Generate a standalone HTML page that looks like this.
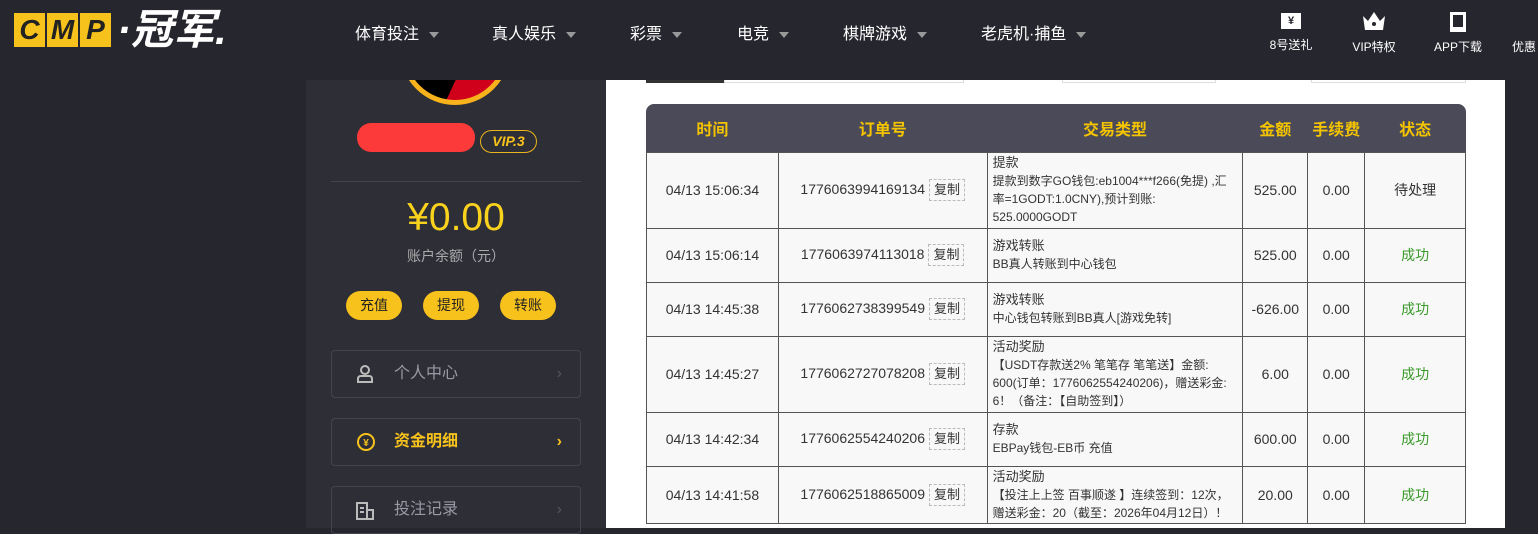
<!DOCTYPE html>
<html><head><meta charset="utf-8"><style>
*{margin:0;padding:0;box-sizing:border-box}
body{width:1538px;height:528px;overflow:hidden;background:#26262e;font-family:"Liberation Sans","Noto Sans CJK SC",sans-serif;position:relative}
.a{position:absolute}
.hdr{left:0;top:0;width:1538px;height:80px;background:#26262e}
.logo span.b{display:inline-block;width:31px;height:34px;background:#f8c21c;margin-right:2px;color:#222;font:italic 900 28px/34px "Liberation Sans",sans-serif;text-align:center}
.nav{top:20px;color:#fff;font-size:16px}
.nav i{display:inline-block;width:0;height:0;border-left:5px solid transparent;border-right:5px solid transparent;border-top:6px solid #999;margin-left:10px;vertical-align:middle}
.ic{top:10px;width:60px;text-align:center;color:#fff;font-size:12px}
.side{left:306px;top:80px;width:300px;height:448px;background:#2e2e37}
.btn{top:291px;width:56px;height:29px;border-radius:15px;background:#f8c21c;color:#222;font-size:14px;text-align:center;line-height:29px}
.menu{left:331px;width:250px;height:48px;border:1px solid #44444e;border-radius:4px;color:#9a9aa6;font-size:16px;line-height:46px;padding-left:62px}
.menu .ar{position:absolute;right:18px;top:0;color:#555560;font-size:16px}
.main{left:606px;top:80px;width:899px;height:448px;background:#fff}
table{position:absolute;left:646px;top:104px;width:820px;border-collapse:collapse;font-size:14px;color:#333}
th{color:#f5c400;font-size:16px;height:48px;font-weight:bold;background:none}
td{border:1px solid #555;background:#f8f8f8;text-align:center;line-height:18px;padding:0 4px}
td.t{text-align:left;font-size:12px;padding:0 5px;line-height:18px}
td.t b{font-weight:normal;font-size:13px}
.cp{display:inline-block;border:1px dashed #bbb;font-size:13px;padding:1px 4px;margin-left:4px;line-height:18px}
.ok{color:#3a9a2a}
</style></head><body>
<div class="a hdr"></div>
<div class="a logo" style="left:14px;top:13px;white-space:nowrap"><span class="b">C</span><span class="b">M</span><span class="b">P</span><span style="color:#fff;font:italic bold 42px/34px 'Liberation Sans','Noto Sans CJK SC',sans-serif;margin-left:4px;vertical-align:top">·冠军.</span></div>
<div class="a nav" style="left:355px">体育投注<i></i></div>
<div class="a nav" style="left:492px">真人娱乐<i></i></div>
<div class="a nav" style="left:630px">彩票<i></i></div>
<div class="a nav" style="left:737px">电竞<i></i></div>
<div class="a nav" style="left:843px">棋牌游戏<i></i></div>
<div class="a nav" style="left:981px">老虎机·捕鱼<i></i></div>
<div class="a ic" style="left:1261px"><div style="margin:3px auto 7px;width:20px;height:16px;background:#fff;color:#26262e;font-size:11px;line-height:16px;font-weight:bold">¥</div>8号送礼</div>
<div class="a ic" style="left:1344px"><svg width="26" height="22" viewBox="0 0 26 22" style="margin-bottom:3px"><path d="M2 6L7 11L13 2L19 11L24 6L22 20H4Z" fill="#fff"/><circle cx="13" cy="14" r="2" fill="#26262e"/></svg><br>VIP特权</div>
<div class="a ic" style="left:1428px"><div style="margin:2px auto 6px;width:16px;height:20px;border:3px solid #fff;border-bottom-width:5px"></div>APP下载</div>
<div class="a ic" style="left:1512px;text-align:left"><div style="height:28px"></div>优惠</div>

<div class="a side"></div>
<div class="a" style="left:400px;top:80px;width:110px;height:25px;overflow:hidden"><div style="width:110px;height:110px;border-radius:50%;border:5px solid #f8b21c;background:linear-gradient(115deg,#000 60%,#d0021b 60%);margin-top:-85px"></div></div>
<div class="a" style="left:357px;top:123px;width:118px;height:29px;border-radius:14px;background:#fc3a3a"></div>
<div class="a" style="left:480px;top:130px;width:57px;height:23px;border:1px solid #e8b51c;border-radius:12px;color:#f8c21c;font:italic bold 14px/21px 'Liberation Sans',sans-serif;text-align:center">VIP.3</div>
<div class="a" style="left:331px;top:181px;width:250px;height:1px;background:#44444e"></div>
<div class="a" style="left:306px;top:196px;width:300px;text-align:center;color:#f8d21c;font-size:39px">¥0.00</div>
<div class="a" style="left:306px;top:246px;width:300px;text-align:center;color:#aaa;font-size:14px">账户余额（元）</div>
<div class="a btn" style="left:346px">充值</div>
<div class="a btn" style="left:423px">提现</div>
<div class="a btn" style="left:500px">转账</div>
<div class="a menu" style="top:350px"><svg class="a" style="left:24px;top:14px" width="18" height="18" viewBox="0 0 18 18" fill="none" stroke="#bbb" stroke-width="2"><circle cx="9" cy="5" r="4"/><path d="M2 17v-3q0-3 3-3h8q3 0 3 3v3z"/></svg>个人中心<span class="ar">›</span></div>
<div class="a menu" style="top:418px;color:#f8c21c;font-weight:bold"><svg class="a" style="left:24px;top:13px" width="20" height="20" viewBox="0 0 20 20" fill="none" stroke="#f8c21c" stroke-width="2"><circle cx="10" cy="10" r="8"/><text x="10" y="14" font-size="10" fill="#f8c21c" stroke="none" text-anchor="middle">¥</text></svg>资金明细<span class="ar" style="color:#f8c21c">›</span></div>
<div class="a menu" style="top:486px"><svg class="a" style="left:24px;top:15px" width="18" height="18" viewBox="0 0 18 18" fill="none" stroke="#bbb" stroke-width="2"><path d="M1 1h10v16H1zM11 8h6v9h-6M4 6h4M4 10h4"/></svg>投注记录<span class="ar">›</span></div>

<div class="a main"></div>
<div class="a" style="left:646px;top:80px;width:78px;height:3px;background:#333"></div>
<div class="a" style="left:724px;top:80px;width:240px;height:3px;border:1px solid #ddd;border-top:0"></div>
<div class="a" style="left:1062px;top:80px;width:154px;height:3px;border:1px solid #ddd;border-top:0"></div>
<div class="a" style="left:1311px;top:80px;width:155px;height:3px;border:1px solid #ddd;border-top:0"></div>
<div class="a" style="left:646px;top:104px;width:820px;height:48px;background:#4a4a58;border-radius:8px 8px 0 0"></div>
<table>
<colgroup><col style="width:132px"><col style="width:209px"><col style="width:256px"><col style="width:65px"><col style="width:57px"><col style="width:101px"></colgroup>
<tr><th>时间</th><th>订单号</th><th>交易类型</th><th>金额</th><th>手续费</th><th>状态</th></tr>
<tr style="height:76px"><td>04/13 15:06:34</td><td>1776063994169134<span class="cp">复制</span></td><td class="t"><b>提款</b><br>提款到数字GO钱包:eb1004***f266(免提) ,汇率=1GODT:1.0CNY),预计到账: 525.0000GODT</td><td>525.00</td><td>0.00</td><td>待处理</td></tr>
<tr style="height:54px"><td>04/13 15:06:14</td><td>1776063974113018<span class="cp">复制</span></td><td class="t"><b>游戏转账</b><br>BB真人转账到中心钱包</td><td>525.00</td><td>0.00</td><td class="ok">成功</td></tr>
<tr style="height:54px"><td>04/13 14:45:38</td><td>1776062738399549<span class="cp">复制</span></td><td class="t"><b>游戏转账</b><br>中心钱包转账到BB真人[游戏免转]</td><td>-626.00</td><td>0.00</td><td class="ok">成功</td></tr>
<tr style="height:76px"><td>04/13 14:45:27</td><td>1776062727078208<span class="cp">复制</span></td><td class="t"><b>活动奖励</b><br>【USDT存款送2% 笔笔存 笔笔送】金额: 600(订单：1776062554240206)，赠送彩金: 6！（备注：【自助签到】）</td><td>6.00</td><td>0.00</td><td class="ok">成功</td></tr>
<tr style="height:54px"><td>04/13 14:42:34</td><td>1776062554240206<span class="cp">复制</span></td><td class="t"><b>存款</b><br>EBPay钱包-EB币 充值</td><td>600.00</td><td>0.00</td><td class="ok">成功</td></tr>
<tr style="height:57px"><td>04/13 14:41:58</td><td>1776062518865009<span class="cp">复制</span></td><td class="t"><b>活动奖励</b><br>【投注上上签 百事顺遂 】连续签到：12次，赠送彩金：20（截至：2026年04月12日）！</td><td>20.00</td><td>0.00</td><td class="ok">成功</td></tr>
</table>
</body></html>
